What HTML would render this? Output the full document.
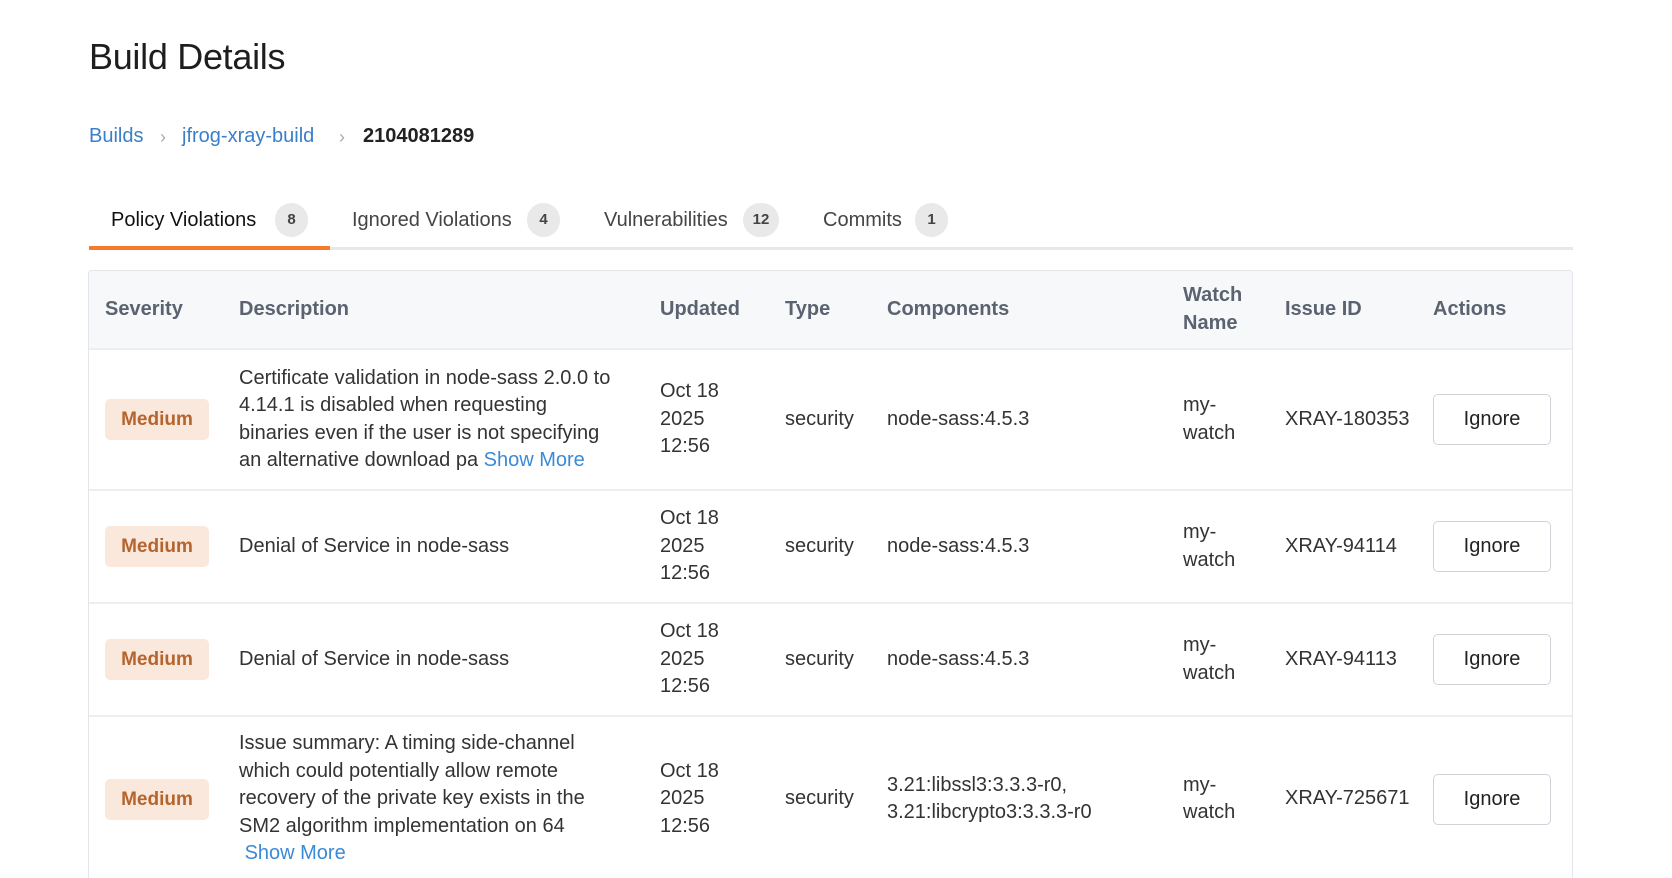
<!DOCTYPE html>
<html><head><meta charset="utf-8"><style>
*{box-sizing:border-box;margin:0;padding:0}
html,body{width:1672px;height:878px;overflow:hidden}
body{background:#fff;font-family:"Liberation Sans",sans-serif;color:#333;position:relative}
.abs{position:absolute;white-space:nowrap}
h1{position:absolute;left:89px;top:36px;font-size:36px;font-weight:normal;color:#1e1e1e;letter-spacing:-0.3px}
.bc{top:125px;font-size:20px}
.bc a{color:#3a7fc9;text-decoration:none}
.sep{color:#aaa;font-size:18px}
.tab{top:209px;font-size:20px;color:#444}
.cnt{position:absolute;top:203px;height:34px;border-radius:17px;background:#e9e9e9;font-size:15px;font-weight:bold;color:#444;text-align:center;line-height:34px}
.line{position:absolute;left:89px;top:247px;width:1484px;height:3px;background:#e6e8eb}
.oline{position:absolute;left:89px;top:246px;width:241px;height:4px;background:#f47b2a}
.box{position:absolute;left:88px;top:270px;width:1485px;height:608px;border:1px solid #e3e5e8;border-bottom:none;border-radius:4px 4px 0 0;overflow:hidden}
table{border-collapse:collapse;table-layout:fixed;width:1483px}
td,th{text-align:left;vertical-align:middle;padding:0 18px 0 0;font-size:20px;line-height:27.5px}
th{background:#f7f8fa;color:#5b6270;font-weight:bold;height:78px}
tr.r td{border-top:2px solid #eceef0}
td:first-child,th:first-child{padding-left:16px}
.badge{display:inline-block;width:104px;height:41px;line-height:41px;text-align:center;background:#fbe8dc;color:#b5642d;font-weight:bold;border-radius:5px;font-size:19px}
.btn{display:inline-block;width:118px;height:51px;line-height:49px;text-align:center;border:1.5px solid #cfd3d8;border-radius:5px;font-size:20px;color:#222}
.sm{color:#3a8ad6}
</style></head><body>
<h1>Build Details</h1>
<div class="abs bc" style="left:89px"><a>Builds</a></div>
<div class="abs bc sep" style="left:160px;top:127px">›</div>
<div class="abs bc" style="left:182px"><a>jfrog-xray-build</a></div>
<div class="abs bc sep" style="left:339px;top:127px">›</div>
<div class="abs bc" style="left:363px;font-weight:bold;color:#222">2104081289</div>

<div class="abs tab" style="left:111px;color:#111">Policy Violations</div><div class="cnt" style="left:275px;width:33px">8</div>
<div class="abs tab" style="left:352px">Ignored Violations</div><div class="cnt" style="left:527px;width:33px">4</div>
<div class="abs tab" style="left:604px">Vulnerabilities</div><div class="cnt" style="left:743px;width:36px">12</div>
<div class="abs tab" style="left:823px">Commits</div><div class="cnt" style="left:915px;width:33px">1</div>
<div class="line"></div><div class="oline"></div>

<div class="box"><table>
<colgroup><col style="width:150px"><col style="width:421px"><col style="width:125px"><col style="width:102px"><col style="width:296px"><col style="width:102px"><col style="width:148px"><col style="width:139px"></colgroup>
<tr><th>Severity</th><th>Description</th><th>Updated</th><th>Type</th><th>Components</th><th>Watch<br>Name</th><th>Issue ID</th><th>Actions</th></tr>
<tr class="r" style="height:141px"><td><span class="badge">Medium</span></td><td>Certificate validation in node-sass 2.0.0 to<br>4.14.1 is disabled when requesting<br>binaries even if the user is not specifying<br>an alternative download pa <span class="sm">Show More</span></td><td>Oct 18<br>2025<br>12:56</td><td>security</td><td>node-sass:4.5.3</td><td>my-<br>watch</td><td>XRAY-180353</td><td><span class="btn">Ignore</span></td></tr>
<tr class="r" style="height:113px"><td><span class="badge">Medium</span></td><td>Denial of Service in node-sass</td><td>Oct 18<br>2025<br>12:56</td><td>security</td><td>node-sass:4.5.3</td><td>my-<br>watch</td><td>XRAY-94114</td><td><span class="btn">Ignore</span></td></tr>
<tr class="r" style="height:113px"><td><span class="badge">Medium</span></td><td>Denial of Service in node-sass</td><td>Oct 18<br>2025<br>12:56</td><td>security</td><td>node-sass:4.5.3</td><td>my-<br>watch</td><td>XRAY-94113</td><td><span class="btn">Ignore</span></td></tr>
<tr class="r" style="height:165px"><td><span class="badge">Medium</span></td><td>Issue summary: A timing side-channel<br>which could potentially allow remote<br>recovery of the private key exists in the<br>SM2 algorithm implementation on 64<br>&nbsp;<span class="sm">Show More</span></td><td>Oct 18<br>2025<br>12:56</td><td>security</td><td>3.21:libssl3:3.3.3-r0,<br>3.21:libcrypto3:3.3.3-r0</td><td>my-<br>watch</td><td>XRAY-725671</td><td><span class="btn">Ignore</span></td></tr>
</table></div>
</body></html>
